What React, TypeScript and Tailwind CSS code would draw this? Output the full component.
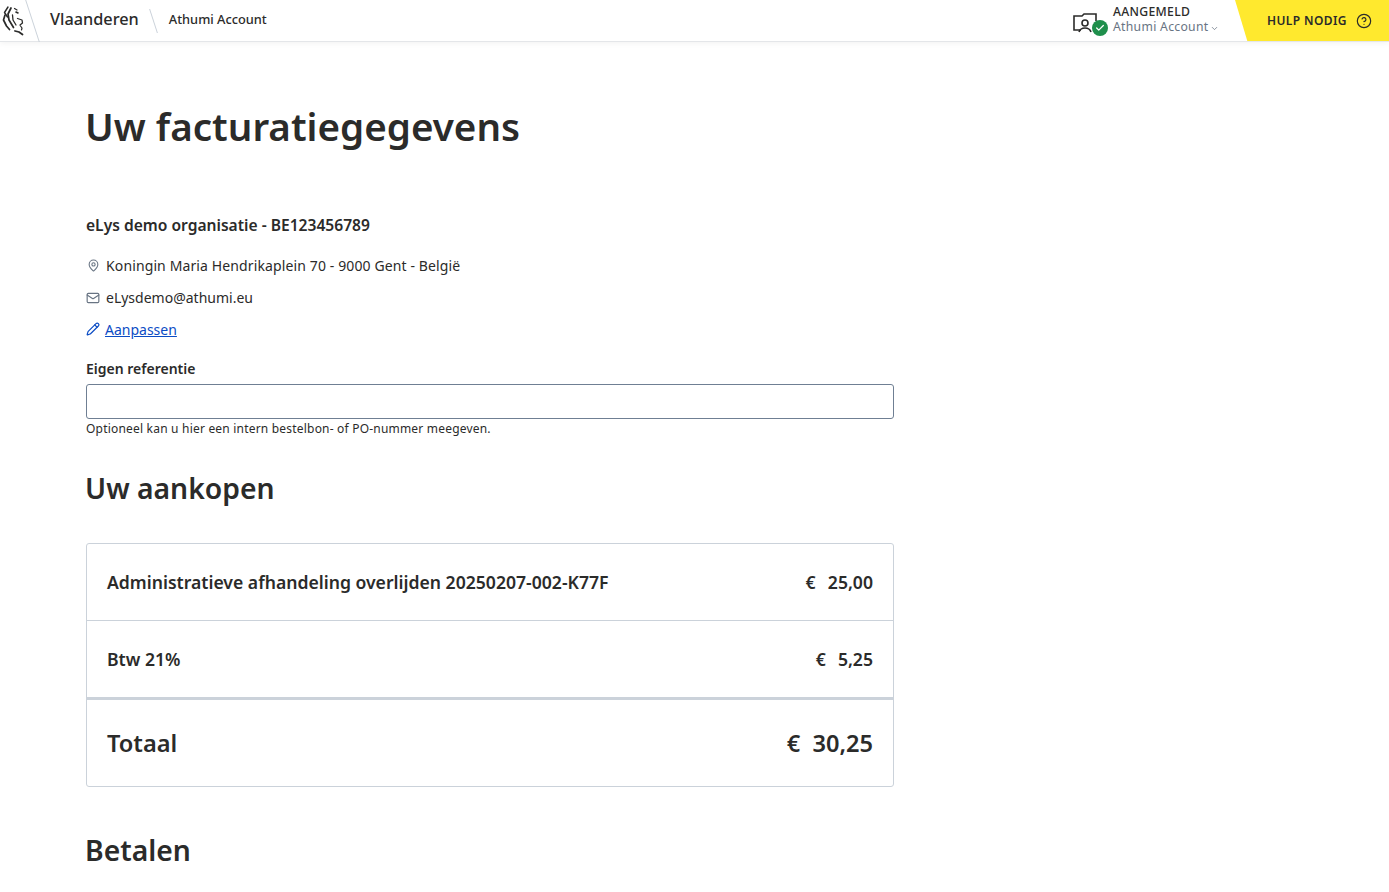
import { Mail, MapPin, Pencil, ChevronDown, CircleHelp, Check } from "lucide-react";

const font = "font-['Noto_Sans','Liberation_Sans',sans-serif]";

function Lion() {
  return (
    <svg width="22" height="30" viewBox="0 0 22 30" fill="none" stroke="#2b2b2a" strokeLinecap="round" strokeLinejoin="round">
      <path d="M6 1 2.500 6.500l3 4.500" strokeWidth="1.400" />
      <path d="M3 9 1.500 14l3 6 3 3.500" strokeWidth="1.700" />
      <path d="M9 2 6 8l1 6 4.500 7.500" strokeWidth="1.700" />
      <path d="M10.500 9l.5 5 3 5" strokeWidth="1.300" />
      <path d="M12.500 2.500 15 4" strokeWidth="1.200" />
      <path d="M14 6l2 1" strokeWidth="1.600" />
      <path d="M15.500 12.500 20 14l.5 3-2.500 2" strokeWidth="1.300" />
      <path d="M18.500 20l1.500 2-.5 2" strokeWidth="1.200" />
      <path d="M13 25l4 1 3.500 2.500" strokeWidth="1.800" />
    </svg>
  );
}

function Row({ label, amount }: { label: string; amount: string }) {
  return (
    <div className="flex h-[77px] items-center justify-between border-b border-[#cbd2da] px-5 text-[17.6px] font-semibold text-[#2b2b2a]">
      <span>{label}</span>
      <span className="whitespace-pre">
        <span className="mr-[3px]">€</span>  {amount}
      </span>
    </div>
  );
}

export default function App() {
  return (
    <div className={`${font} min-h-[892px] overflow-hidden bg-white text-[#2b2b2a]`}>
      <header className="flex h-[42px] items-center justify-between border-b border-[#e4e6e9] shadow-[0_1px_6px_rgba(0,0,0,0.06)]">
        <div className="flex h-full items-center">
          <div className="w-[32px] pl-0.5">
            <Lion />
          </div>
          <div className="h-[42px] w-px skew-x-[18deg] bg-[#cbd2da]" />
          <span className="ml-[17px] -translate-y-px text-[16.3px] font-medium">Vlaanderen</span>
          <div className="ml-[14px] h-6 w-px skew-x-[18deg] bg-[#cbd2da]" />
          <span className="ml-[15px] -translate-y-px text-[12.8px] font-medium">Athumi Account</span>
        </div>
        <div className="flex h-full items-center">
          <div className="relative mr-[5px] h-6 w-[35px]">
            <svg width="30" height="22" viewBox="0 0 30 22" fill="none" stroke="currentColor" strokeWidth="1.6" className="mt-1">
              <path d="M8 17H1V3h8l2-2h12v7" />
              <circle cx="12" cy="10" r="3" />
              <path d="M6 19c1-3 3-4 6-4s5 1 6 4" />
            </svg>
            <span className="absolute left-[19px] top-[11px] flex h-4 w-4 items-center justify-center rounded-full bg-[#1f8f4c]">
              <Check size={10} color="white" strokeWidth={3} />
            </span>
          </div>
          <div className="w-[122px] -translate-y-px leading-none">
            <div className="text-[12.2px] font-medium tracking-[0.3px]">AANGEMELD</div>
            <div className="mt-[3px] flex items-center text-[12.2px] tracking-[0.3px] text-[#687483]">
              Athumi Account
              <ChevronDown size={9} className="ml-0.5 mt-0.5" />
            </div>
          </div>
          <div className="flex h-full w-[154px] items-center bg-[#ffe92e] pl-[32px] [clip-path:polygon(0_0,100%_0,100%_100%,8%_100%)]">
            <span className="text-[12px] font-semibold tracking-[0.4px]">HULP NODIG</span>
            <CircleHelp size={16} className="ml-[9px]" strokeWidth={1.8} />
          </div>
        </div>
      </header>

      <main className="w-[894px] pl-[86px]">
        <h1 className="-ml-px mt-[52px] text-[38.6px] font-semibold leading-[64px]">Uw facturatiegegevens</h1>
        <h2 className="mt-[55px] text-[15.6px] font-semibold leading-[24px]">eLys demo organisatie - BE123456789</h2>

        <div className="mt-[16px] flex h-6 items-center text-[14px] tracking-[0.12px]">
          <MapPin size={13} className="ml-px mr-[6px] mt-px text-[#687483]" />
          Koningin Maria Hendrikaplein 70 - 9000 Gent - België
        </div>
        <div className="mt-2 flex h-6 items-center text-[14px]">
          <Mail size={14} className="mr-[6px] mt-0.5 text-[#687483]" />
          eLysdemo@athumi.eu
        </div>
        <div className="mt-2 flex h-6 items-center text-[14px] text-[#0b4cc4]">
          <Pencil size={14} className="mr-[5px]" />
          <a className="underline">Aanpassen</a>
        </div>

        <label className="mt-[16px] block text-[14px] font-semibold leading-[24px]">Eigen referentie</label>
        <input className="mt-[3px] block h-[35px] w-full rounded-[3px] border border-[#6f7f93] bg-white" />
        <p className="mt-[1px] text-[12px] leading-[18px] tracking-[0.2px]">Optioneel kan u hier een intern bestelbon- of PO-nummer meegeven.</p>

        <h2 className="-ml-px mt-[26px] text-[28.3px] font-semibold leading-[48px]">Uw aankopen</h2>

        <div className="mt-[31px] overflow-hidden rounded-[3px] border border-[#cbd2da]">
          <Row label="Administratieve afhandeling overlijden 20250207-002-K77F" amount="25,00" />
          <Row label="Btw 21%" amount="5,25" />
          <div className="flex h-[88px] items-center justify-between border-t-2 border-[#cbd2da] px-5 pt-0.5 text-[23.6px] font-semibold">
            <span>Totaal</span>
            <span className="whitespace-pre">€  30,25</span>
          </div>
        </div>

        <h2 className="-ml-px mt-[39px] text-[28.3px] font-semibold leading-[48px]">Betalen</h2>
      </main>
    </div>
  );
}
